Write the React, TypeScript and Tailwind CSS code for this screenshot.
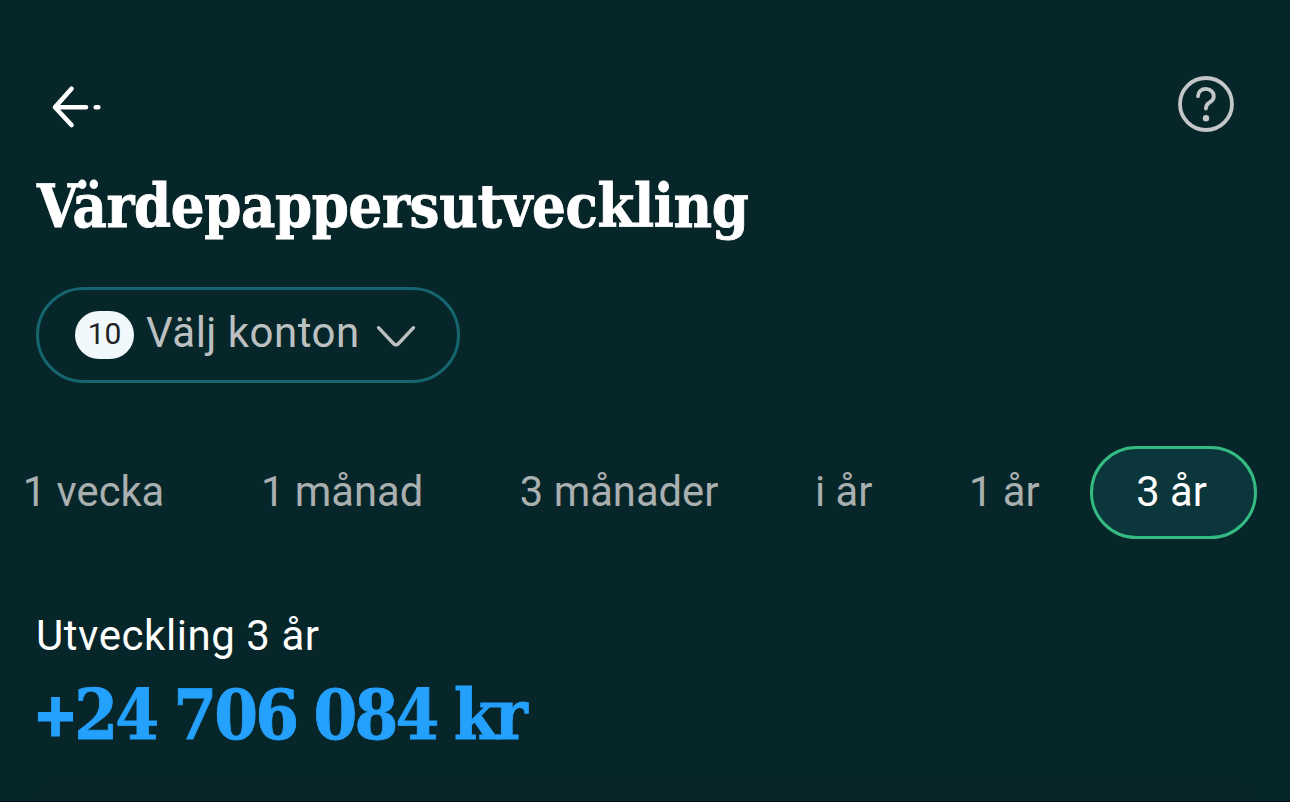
const periods = ['1 vecka', '1 månad', '3 månader', 'i år', '1 år', '3 år'];
const activePeriod = '3 år';

function BackIcon() {
  return (
    <svg width="52" height="44" viewBox="0 0 52 44" fill="none" stroke="currentColor" strokeWidth="4.6" strokeLinecap="round" strokeLinejoin="round">
      <path d="M21.5 3.8 5 22.3 21.5 40M5 22.3H36M45.7 22.3H48.3" />
    </svg>
  );
}

function HelpIcon() {
  return (
    <svg width="56" height="56" viewBox="0 0 56 56" fill="none" stroke="currentColor" strokeWidth="3.8" strokeLinecap="round" strokeLinejoin="round">
      <circle cx="28" cy="28" r="26" />
      <path d="M20 20.2C20 15.8 23.4 12.9 27.8 12.9S35.8 16 35.8 20.4C35.8 23.2 34 24.9 31.6 26.4C29 28 27.9 29.2 27.9 32.6" />
      <circle cx="28" cy="42.2" r="3.2" fill="currentColor" stroke="none" />
    </svg>
  );
}

function ChevronIcon() {
  return (
    <svg width="40" height="24" viewBox="0 0 40 24" fill="none" stroke="currentColor" strokeWidth="3.4" strokeLinecap="round" strokeLinejoin="round">
      <path d="M2.5 2.7 17.4 18.5Q20 21.2 22.6 18.5L37.5 2.7" />
    </svg>
  );
}

export default function App() {
  return (
    <div className="flex h-[802px] w-[1290px] flex-col overflow-hidden bg-[#072629] font-['Roboto',sans-serif] text-white">
      {/* Top bar */}
      <header className="flex items-start justify-between pt-[76px] pr-14 pl-[50px]">
        <button aria-label="Tillbaka" className="pt-[9px]">
          <BackIcon />
        </button>
        <button aria-label="Hjälp" className="text-[#c3c7c8]">
          <HelpIcon />
        </button>
      </header>

      <h1 className="mt-[35px] h-[80px] pl-[37px] font-['DejaVu_Serif_Condensed','DejaVu_Serif',serif] text-[59px] leading-[80px] font-bold tracking-[-0.35px] whitespace-nowrap [-webkit-text-stroke:0.8px_currentColor]">
        Värdepappersutveckling
      </h1>

      {/* Account picker */}
      <button className="mt-10 ml-9 flex h-24 w-[424px] items-center rounded-full border-3 border-[#15656f] pl-9 text-[#bcc0c1]">
        <span className="flex h-12 w-[59px] items-center justify-center rounded-full bg-[#f1f8fb] pb-0.5 text-[30px] leading-none text-[#222]">
          10
        </span>
        <span className="ml-3 pb-1 text-[42px] leading-none tracking-[0.5px]">Välj konton</span>
        <span className="ml-4 pt-[3px]">
          <ChevronIcon />
        </span>
      </button>

      {/* Period tabs, scrolled to the end */}
      <nav className="mt-[63px] flex justify-end overflow-hidden pr-[33px]">
        {periods.map((period) => (
          <button
            key={period}
            className={`h-[93px] shrink-0 rounded-full border-3 pr-[47.2px] pb-[2px] pl-[43.5px] text-[41.7px] leading-none whitespace-nowrap ${
              period === activePeriod ? 'border-[#35bb82] bg-[#0a363c] pr-12 text-white' : 'border-transparent text-[#aaafb0]'
            }`}
          >
            {period}
          </button>
        ))}
      </nav>

      {/* Result */}
      <section className="mt-[72px] pl-9">
        <p className="text-[42px] leading-[50px] tracking-[0.55px]">Utveckling 3 år</p>
        <p className="mt-[9px] -ml-0.5 font-['DejaVu_Serif_Condensed','DejaVu_Serif',serif] text-[70px] leading-[90px] font-bold tracking-[-2.8px] [word-spacing:-2px] whitespace-nowrap text-[#24a0fd] [-webkit-text-stroke:0.8px_currentColor]">
          <span className="relative -top-1 text-[57px] leading-none [-webkit-text-stroke:3px_currentColor]">+</span>24 706 084 kr
        </p>
      </section>

      {/* Upper edge of the chart card */}
      <div className="mt-auto h-px shrink-0 bg-[#010d16]">
        <div className="mx-12 h-px shadow-[0_4px_30px_2px_rgba(12,20,26,0.8)]" />
      </div>
    </div>
  );
}
